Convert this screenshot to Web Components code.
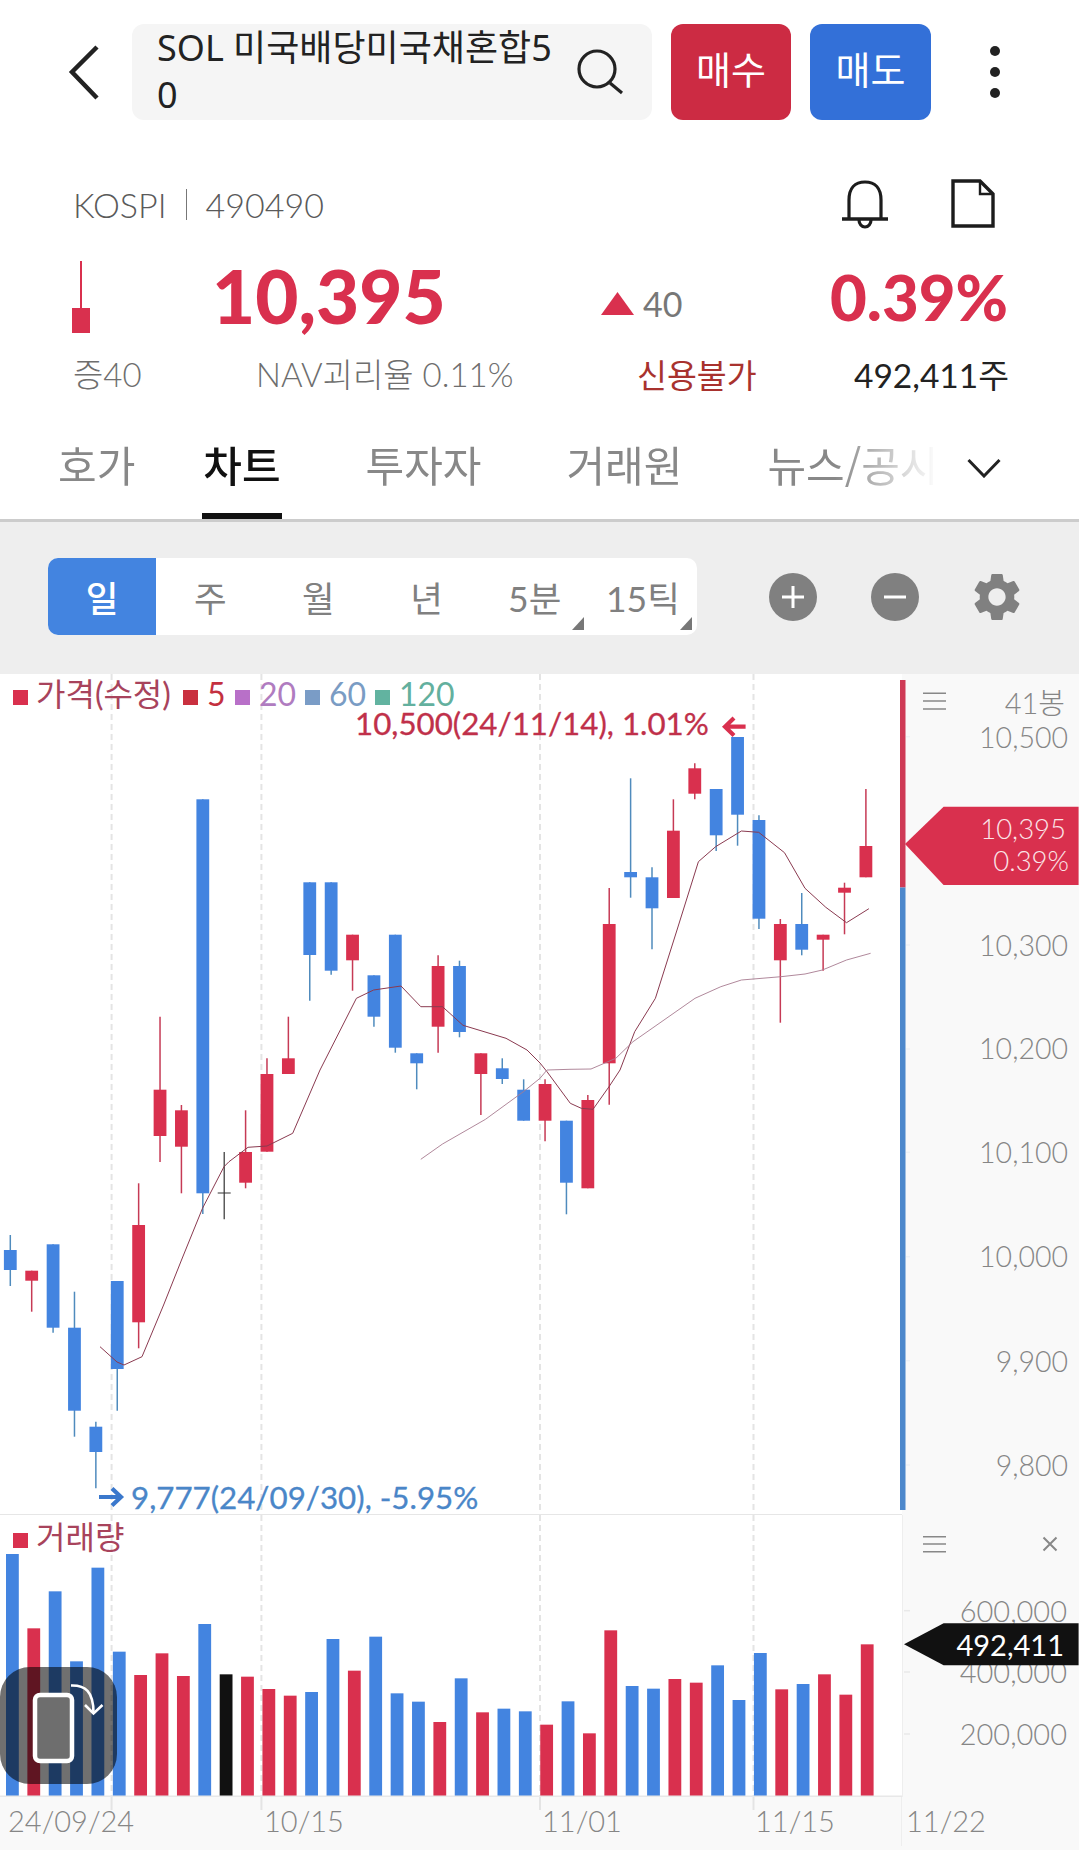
<!DOCTYPE html>
<html lang="ko">
<head>
<meta charset="utf-8">
<title>SOL 미국배당미국채혼합50</title>
<style>
  html, body { margin: 0; padding: 0; background: #fff; }
  body { width: 1079px; height: 1850px; overflow: hidden; font-family: Lato, "Noto Sans CJK KR", sans-serif; }
</style>
</head>
<body>
<app-header name="SOL 미국배당미국채혼합50"></app-header>
<quote-summary></quote-summary>
<tab-bar>
  <tab-item style="margin-right:-17px">호가</tab-item>
  <tab-item active>차트</tab-item>
  <tab-item>투자자</tab-item>
  <tab-item>거래원</tab-item>
  <tab-item>뉴스/공시</tab-item>
</tab-bar>
<chart-toolbar>
  <period-item active>일</period-item>
  <period-item>주</period-item>
  <period-item>월</period-item>
  <period-item>년</period-item>
  <period-item more>5분</period-item>
  <period-item more>15틱</period-item>
</chart-toolbar>
<stock-chart>
  <candle-pane></candle-pane>
  <volume-pane></volume-pane>
  <date-axis></date-axis>
</stock-chart>

<script>
// Colours that are used by more than one chart part
const RED = '#d9304e'
const BLUE = '#4384e0'
const AXIS = '#868686'
const GRID_X = [111.6, 261.4, 540, 753.5]

/**
 * Helper for the elements that only need a template in an open shadow root.
 *
 * @param {string} name - The tag name.
 * @param {string} html - The markup and the styles.
 */
function simpleElement (name, html) {
  const template = document.createElement('template')
  template.innerHTML = html
  customElements.define(name, class extends HTMLElement {
    constructor () {
      super()
      this.attachShadow({ mode: 'open' }).appendChild(template.content.cloneNode(true))
    }
  })
}

customElements.define('app-header', class extends HTMLElement {
  constructor () {
    super()
    this.attachShadow({ mode: 'open' }).innerHTML = `
      <style>
        :host { display: flex; box-sizing: border-box; height: 144px; padding-top: 24px; align-items: flex-start; font-family: "Noto Sans", "Noto Sans CJK KR", sans-serif; }
        .back { width: 132px; height: 96px; flex: none; }
        .search { box-sizing: border-box; width: 520px; height: 96px; flex: none; display: flex; background: #f5f5f5; border-radius: 12px; padding-left: 25px; }
        .search p { margin: 0; width: 405px; font-size: 36px; line-height: 47px; color: #222; word-break: break-all; }
        .search svg { margin-left: 13px; flex: none; }
        .btn { height: 96px; width: 120px; margin-left: 19px; flex: none; box-sizing: border-box; border-radius: 12px; color: #fff; font-size: 38px; line-height: 88px; text-align: center; font-family: "Noto Sans CJK KR", sans-serif; }
        .buy { background: #cc2b43; }
        .sell { background: #3370d8; margin-left: 19px; width: 121px; }
        .more { margin-left: 59px; flex: none; }
      </style>
      <svg class="back" viewBox="0 0 132 96"><path d="M97 23 L72 48 L97 74" fill="none" stroke="#222" stroke-width="4.5"/></svg>
      <div class="search">
        <p>${this.getAttribute('name')}</p>
        <svg width="50" height="96" viewBox="0 0 50 96"><circle cx="22" cy="45" r="18" fill="none" stroke="#222" stroke-width="3.2"/><path d="M35 59 L47 69" stroke="#222" stroke-width="3.2"/></svg>
      </div>
      <div class="btn buy">매수</div>
      <div class="btn sell">매도</div>
      <svg class="more" width="10" height="96" viewBox="0 0 10 96"><circle cx="5" cy="27" r="5" fill="#222"/><circle cx="5" cy="48" r="5" fill="#222"/><circle cx="5" cy="69" r="5" fill="#222"/></svg>`
  }
})

simpleElement('quote-summary', `
  <style>
    :host { display: block; box-sizing: border-box; height: 276px; padding: 12px 73px 0; font-family: Lato, "Noto Sans CJK KR", sans-serif; }
    .top { display: flex; align-items: center; height: 96px; color: #5a5a5a; font-size: 34px; font-weight: 300; }
    .sep { width: 1px; height: 31px; background: #777; margin: 0 19px 0 19px; }
    .bell { margin-left: auto; margin-right: 3px; }
    .doc { margin-left: 59px; margin-right: 11px; }
    .price { display: grid; grid-template-columns: 144px 385px 229px 1fr; align-items: center; height: 90px; margin-left: -1px; }
    .now { font-size: 74.5px; font-weight: 900; color: ${RED}; line-height: 1; margin-top: -4px; margin-left: -4px; }
    .diff { display: flex; align-items: center; margin-top: 13px; color: #777; font-size: 34px; gap: 9px; }
    .rate { font-size: 63.5px; font-weight: 900; color: ${RED}; line-height: 1; }
    .info { display: grid; grid-template-columns: 183px 381px 1fr auto; align-items: center; height: 62px; margin-right: -3px; font-size: 33px; font-weight: 300; color: #6e6e6e; }
    .credit { color: #a8322e; font-size: 32.5px; font-weight: 400; }
    .qty { color: #222; font-size: 33.5px; font-weight: 400; }
  </style>
  <div class="top">
    <span>KOSPI</span><span class="sep"></span><span>490490</span>
    <svg class="bell" width="48" height="50" viewBox="0 0 48 50"><path d="M8 39 V21 C8 9 14 3 24 3 C34 3 40 9 40 21 V39" fill="none" stroke="#1c1c1c" stroke-width="3.2"/><path d="M1 40 H47" stroke="#1c1c1c" stroke-width="3.6"/><path d="M18 41 a6 7 0 0 0 12 0" fill="none" stroke="#1c1c1c" stroke-width="3.2"/></svg>
    <svg class="doc" width="44" height="50" viewBox="0 0 44 50"><path d="M2 2 H29 L42 15 V47 H2 Z" fill="none" stroke="#1c1c1c" stroke-width="3.4"/><path d="M29 2 V15 H42" fill="none" stroke="#1c1c1c" stroke-width="2.4"/></svg>
  </div>
  <div class="price">
    <svg width="20" height="72" viewBox="0 0 20 72"><rect x="8" y="0" width="2" height="48" fill="${RED}"/><rect x="0" y="47" width="18" height="25" fill="${RED}"/></svg>
    <span class="now">10,395</span>
    <span class="diff"><svg width="33" height="23" viewBox="0 0 33 23"><path d="M16.5 0 L33 23 H0 Z" fill="${RED}"/></svg><span>40</span></span>
    <span class="rate">0.39%</span>
  </div>
  <div class="info">
    <span>증40</span><span>NAV괴리율 0.11%</span><span class="credit">신용불가</span><span class="qty">492,411주</span>
  </div>
`)

simpleElement('tab-bar', `
  <style>
    :host { display: flex; box-sizing: border-box; height: 102px; border-bottom: 3px solid #ccc; font-family: "Noto Sans CJK KR", sans-serif; }
    .list { flex: none; width: 938px; display: flex; gap: 85px; padding-left: 58px; box-sizing: border-box; overflow: hidden; -webkit-mask-image: linear-gradient(to right, #000 835px, transparent 938px); mask-image: linear-gradient(to right, #000 835px, transparent 938px); }
    svg { margin: 38px 0 0 29px; flex: none; }
  </style>
  <div class="list"><slot></slot></div>
  <svg width="34" height="20" viewBox="0 0 34 20"><path d="M1.5 2 L17 18 L32.5 2" fill="none" stroke="#222" stroke-width="3"/></svg>
`)

simpleElement('tab-item', `
  <style>
    :host { display: block; position: relative; flex: none; height: 99px; line-height: 88px; font-size: 42px; color: #888; white-space: nowrap; }
    :host([active]) { color: #111; font-weight: 500; }
    :host([active])::after { content: ""; position: absolute; left: -1px; right: -1px; bottom: 0; height: 6px; background: #111; }
  </style>
  <slot></slot>
`)

simpleElement('chart-toolbar', `
  <style>
    :host { display: flex; align-items: flex-start; box-sizing: border-box; height: 152px; background: #eee; padding: 36px 0 0 48px; }
    .periods { display: grid; grid-template-columns: repeat(6, 1fr); width: 649px; height: 77px; background: #fff; border-radius: 10px; overflow: hidden; }
    .zoom { margin: 15px 0 0 72px; width: 48px; height: 48px; flex: none; }
    .minus { margin-left: 54px; }
    .gear { margin-left: 54px; }
  </style>
  <div class="periods"><slot></slot></div>
  <svg class="zoom" viewBox="0 0 48 48"><circle cx="24" cy="24" r="24" fill="#808080"/><path d="M24 13 V35 M13 24 H35" stroke="#fff" stroke-width="3"/></svg>
  <svg class="zoom minus" viewBox="0 0 48 48"><circle cx="24" cy="24" r="24" fill="#808080"/><path d="M13 24 H35" stroke="#fff" stroke-width="3"/></svg>
  <svg class="zoom gear" viewBox="2.4 2 19.2 20"><path fill="#808080" d="M19.14 12.94c.04-.3.06-.61.06-.94 0-.32-.02-.64-.07-.94l2.03-1.58c.18-.14.23-.41.12-.61l-1.92-3.32c-.12-.22-.37-.29-.59-.22l-2.39.96c-.5-.38-1.03-.7-1.62-.94l-.36-2.54c-.04-.24-.24-.41-.48-.41h-3.84c-.24 0-.43.17-.47.41l-.36 2.54c-.59.24-1.13.57-1.62.94l-2.39-.96c-.22-.08-.47 0-.59.22L2.74 8.87c-.12.21-.08.47.12.61l2.03 1.58c-.05.3-.09.63-.09.94s.02.64.07.94l-2.03 1.58c-.18.14-.23.41-.12.61l1.92 3.32c.12.22.37.29.59.22l2.39-.96c.5.38 1.03.7 1.62.94l.36 2.54c.05.24.24.41.48.41h3.84c.24 0 .44-.17.47-.41l.36-2.54c.59-.24 1.13-.56 1.62-.94l2.39.96c.22.08.47 0 .59-.22l1.92-3.32c.12-.22.07-.47-.12-.61l-2.01-1.58zM12 15.6c-1.98 0-3.6-1.62-3.6-3.6s1.62-3.6 3.6-3.6 3.6 1.62 3.6 3.6-1.62 3.6-3.6 3.6z"/></svg>
`)

simpleElement('period-item', `
  <style>
    :host { display: flex; position: relative; align-items: center; justify-content: center; font-family: Lato, "Noto Sans CJK KR", sans-serif; font-size: 35.5px; color: #808080; }
    :host([active]) { background: ${BLUE}; color: #fff; font-weight: 500; }
    :host([more])::after { content: ""; position: absolute; right: 5px; bottom: 5px; width: 0; height: 0; border-style: solid; border-width: 0 0 13px 12px; border-color: transparent transparent #777 transparent; }
  </style>
  <slot></slot>
`)

simpleElement('stock-chart', `
  <style>
    :host { display: flex; flex-direction: column; position: relative; height: 1176px; background: #fff; }
    .rotate { position: absolute; left: 0; top: 993px; width: 117px; height: 117px; border-radius: 30px; background: rgba(0,0,0,.56); }
    .rotate svg { position: absolute; left: 0; top: 0; }
  </style>
  <slot></slot>
  <div class="rotate">
    <svg width="117" height="117" viewBox="0 0 117 117">
      <rect x="35" y="28" width="37" height="66" rx="5" fill="#6e6e6e" stroke="#fff" stroke-width="4.5"/>
      <path d="M71 18.5 C85 18 93.5 24 93.5 46" fill="none" stroke="#fff" stroke-width="2.6"/>
      <path d="M85 38 L93.5 46.5 L102.5 38" fill="none" stroke="#fff" stroke-width="2.6"/>
    </svg>
  </div>
`)

// Type, wick top, body top, body bottom, wick bottom of the 41 candles
const CANDLES = [
  ['b', 1235, 1250, 1270, 1286], ['r', 1270.7, 1270.7, 1280.7, 1311.7], ['b', 1244.3, 1244.3, 1327.7, 1332.7],
  ['b', 1291.7, 1327.7, 1410.7, 1436.7], ['b', 1421.7, 1426.7, 1452, 1488.3], ['b', 1281, 1281, 1369, 1410.7],
  ['r', 1183.3, 1225, 1322.3, 1348.3], ['r', 1016.7, 1089.7, 1136, 1162], ['r', 1105, 1110.3, 1146.7, 1193.3],
  ['b', 799.3, 799.3, 1193.3, 1214], ['k', 1152, 1193, 1194, 1219.3], ['r', 1110.3, 1152, 1182.7, 1188.3],
  ['r', 1058.3, 1074, 1151.7, 1151.7], ['r', 1016.7, 1058.3, 1074, 1074], ['b', 882.3, 882.3, 955, 1000.7],
  ['b', 882.3, 882.3, 970.7, 974.7], ['r', 934.7, 934.7, 960.3, 990.7], ['b', 975.3, 975.3, 1016.7, 1026.7],
  ['b', 934.7, 934.7, 1047.7, 1052.7], ['b', 1053.3, 1053.3, 1063.3, 1089.3], ['r', 955.3, 966, 1026.7, 1052.7],
  ['b', 960.7, 966, 1032, 1037.3], ['r', 1053.3, 1053.3, 1074, 1115], ['b', 1058.3, 1068.3, 1079, 1084],
  ['b', 1079.3, 1089.7, 1120.7, 1120.7], ['r', 1079.3, 1084, 1120.7, 1141.3], ['b', 1120.7, 1120.7, 1182.7, 1214.3],
  ['r', 1095, 1100, 1188.3, 1188.3], ['r', 888, 924, 1063.3, 1104.7], ['b', 778.3, 872, 877.3, 897.7],
  ['b', 867.3, 877.3, 908.3, 949.3], ['r', 799.3, 830.7, 898, 898], ['r', 763.3, 768.3, 793.7, 799.3],
  ['b', 789, 789, 835.3, 851], ['b', 737, 737, 814.7, 845.7], ['b', 815.3, 820, 918.7, 929],
  ['r', 919, 924, 960.3, 1022.7], ['b', 893, 924, 949.7, 955.3], ['r', 934.7, 934.7, 939.7, 970.7],
  ['r', 882.7, 887.7, 892.7, 934.3], ['r', 789, 846, 877.3, 877.3]
]

const MA5 = '100,1346.7 117,1362 124,1365 142,1356.7 163.6,1305 181.5,1260 202.5,1208.3 224,1166.7 229,1161.7 248,1147.3 267,1146 292.7,1133.3 320,1070 356.4,998.3 373.6,990 401,986 420.8,1006.7 442.5,1006.7 463,1025.3 506,1038.3 527,1050 540,1063 547,1071.7 570.3,1103.3 581.3,1108.3 593,1109.3 609,1086.7 620,1070 634.7,1031.7 655.4,998.3 677,930 698.4,861.7 715.6,846.7 741.4,831 758.7,832.3 784.5,852.7 805,888.3 825.8,907.3 846.5,922.7 868.9,908.7'
const MA20 = '420.8,1159.3 442.5,1144 485.5,1119.3 523.4,1091.7 540,1078.3 547,1070 570,1069.3 591,1069 615.8,1058.3 633,1041.7 695,998.3 720.8,986.7 741.4,980 781,976.7 805,974 822.4,970 846.5,960 870.6,953.3'

customElements.define('candle-pane', class extends HTMLElement {
  constructor () {
    super()
    this.attachShadow({ mode: 'open' }).innerHTML = `
      <style>
        :host { display: block; position: relative; flex: none; height: 841px; overflow: hidden; font-family: Lato, "Noto Sans CJK KR", sans-serif; }
        svg { position: absolute; left: 0; top: 0; }
        .axis { position: absolute; left: 902px; right: 0; top: 0; bottom: 0; background: #f9f9f9; }
        span { position: absolute; transform: translateY(-50%); white-space: nowrap; line-height: .85; }
        .price { right: 11px; font-size: 28.5px; color: ${AXIS}; font-weight: 300; }
        .legend { font-size: 32px; }
        .tag { right: 13px; font-size: 27.5px; color: #fbe4e8; font-weight: 300; }
        .note { font-size: 31.3px; -webkit-text-stroke: .3px currentColor; }
      </style>
      <div class="axis"></div>
      <svg width="1079" height="841" viewBox="0 674 1079 841">${this.#grid()}${this.#candles()}${this.#rest()}</svg>
      ${this.#labels()}`
  }

  /**
   * The dashed lines of the time scale and the divider under the pane.
   *
   * @returns {string} SVG markup.
   */
  #grid () {
    const lines = GRID_X.map(x => `<path d="M${x} 674 V1515" stroke="#e4e4e4" stroke-width="2" stroke-dasharray="6 4"/>`)
    return lines.join('') + '<path d="M0 1515 H902" stroke="#e6e6e6" stroke-width="2"/>'
  }

  /**
   * The candles, built from the table of prices.
   *
   * @returns {string} SVG markup.
   */
  #candles () {
    return CANDLES.map(([type, top, bodyTop, bodyBottom, bottom], i) => {
      const x = 10.3 + 21.39 * i
      if (type === 'k') {
        return `<path d="M${x} ${top} V${bottom} M${x - 6.5} ${bodyTop} H${x + 6.5}" stroke="#333" stroke-width="1.2"/>`
      }
      const wick = type === 'r' ? '#c63a55' : '#4f8bbd'
      const body = type === 'r' ? RED : BLUE
      return `<path d="M${x} ${top} V${bottom}" stroke="${wick}" stroke-width="1.5"/><rect x="${x - 6.4}" y="${bodyTop}" width="12.8" height="${bodyBottom - bodyTop}" fill="${body}"/>`
    }).join('')
  }

  /**
   * Moving averages, the side bar, the ticks, the price tag and the arrows.
   *
   * @returns {string} SVG markup.
   */
  #rest () {
    const ticks = [736.7, 945, 1049, 1152.3, 1256.7, 1360.7, 1465].map(y => `<path d="M906 ${y} H910" stroke="#eef1f5" stroke-width="1.5"/>`).join('')
    const squares = [[13, RED], [183, '#c9303f'], [235, '#b870c8'], [305, '#7a9cc6'], [375, '#62b3a0']]
      .map(([x, c]) => `<rect x="${x}" y="690" width="15" height="15" fill="${c}"/>`).join('')
    return `
      <polyline points="${MA5}" fill="none" stroke="#8a3a50" stroke-width="1"/>
      <polyline points="${MA20}" fill="none" stroke="#a77a90" stroke-width="0.9"/>
      <rect x="900" y="680" width="5.5" height="207.5" fill="#cf3a56"/>
      <rect x="900" y="887.5" width="5.5" height="622.5" fill="#4d88cc"/>
      ${ticks}${squares}
      <path d="M905 844 L943.6 806.7 H1078.6 V885 H943.6 Z" fill="${RED}"/>
      <path d="M923 693.3 H946 M923 701 H946 M923 709 H946" stroke="#888" stroke-width="1.6"/>
      <path d="M745.6 726.7 H727 M734 718 L725 726.7 L734 735.5" fill="none" stroke="${RED}" stroke-width="4.2"/>
      <path d="M99 1497 H119 M112 1488.5 L121 1497 L112 1505.5" fill="none" stroke="#3a78cc" stroke-width="4.2"/>`
  }

  /**
   * The texts that sit on the chart, each at its own place on the scale.
   *
   * @returns {string} HTML markup.
   */
  #labels () {
    const y = v => v - 674
    const prices = [['10,500', 736.5], ['10,300', 944.5], ['10,200', 1048], ['10,100', 1151.5], ['10,000', 1256], ['9,900', 1360.5], ['9,800', 1464.5]]
      .map(([text, top]) => `<span class="price" style="top:${y(top)}px">${text}</span>`).join('')
    const legend = [['가격(수정)', 36, '#a8435c'], ['5', 207, '#c4303f'], ['20', 259, '#b07cc0'], ['60', 329, '#7a9cc4'], ['120', 399, '#63b09e']]
      .map(([text, left, c]) => `<span class="legend" style="left:${left}px;top:${y(694)}px;color:${c}">${text}</span>`).join('')
    return `${legend}${prices}
      <span class="price" style="top:${y(702.5)}px;right:14px;font-size:29px">41봉</span>
      <span class="tag" style="top:${y(829)}px">10,395</span>
      <span class="tag" style="top:${y(861)}px;right:10px">0.39%</span>
      <span class="note" style="left:355px;top:${y(723)}px;color:#c0304a">10,500(24/11/14), 1.01%</span>
      <span class="note" style="left:131px;top:${y(1496.7)}px;color:#4a86c8">9,777(24/09/30), -5.95%</span>`
  }
})

// Kind and top of the volume bars, in order from the left
const VOLUME = [
  ['b', 132], ['r', 355], ['b', 244], ['b', 454], ['b', 173], ['b', 425], ['r', 495], ['r', 430], ['r', 498], ['b', 342], ['k', 493],
  ['r', 500], ['r', 537], ['r', 557], ['b', 546], ['b', 387], ['r', 482], ['b', 380], ['b', 550], ['b', 575], ['r', 636], ['b', 505],
  ['r', 607], ['b', 596], ['b', 604], ['r', 644], ['b', 574], ['r', 670], ['r', 361], ['b', 528], ['b', 536], ['r', 507], ['r', 518],
  ['b', 466], ['b', 570], ['b', 429], ['r', 538], ['b', 522], ['r', 493], ['r', 554], ['r', 403]
]

customElements.define('volume-pane', class extends HTMLElement {
  constructor () {
    super()
    const fill = { b: BLUE, r: RED, k: '#111' }
    const bars = VOLUME.map(([kind, top], i) => {
      const x = 12.4 + 21.37 * i
      const y = 1510 + top / 3
      return `<rect x="${x - 6.4}" y="${y}" width="12.8" height="${1796 - y}" fill="${fill[kind]}"/>`
    }).join('')
    const grid = GRID_X.map(x => `<path d="M${x} 1515 V1797" stroke="#e4e4e4" stroke-width="2" stroke-dasharray="6 4"/>`).join('')
    const ticks = [1610.7, 1672, 1734].map(y => `<path d="M904 ${y} H910" stroke="#e9e9e9" stroke-width="1.5"/>`).join('')
    const labels = [['600,000', 1610], ['400,000', 1671], ['200,000', 1733]]
      .map(([text, y]) => `<span class="vol" style="top:${y - 1515}px">${text}</span>`).join('')
    this.attachShadow({ mode: 'open' }).innerHTML = `
      <style>
        :host { display: block; position: relative; flex: none; height: 282px; overflow: hidden; font-family: Lato, "Noto Sans CJK KR", sans-serif; }
        svg { position: absolute; left: 0; top: 0; }
        .axis { position: absolute; left: 902px; right: 0; top: 0; bottom: 0; background: #f9f9f9; border-left: 1px solid #eee; box-sizing: border-box; }
        span { position: absolute; transform: translateY(-50%); white-space: nowrap; line-height: 1; }
        .vol { right: 12px; font-size: 29px; font-weight: 300; color: ${AXIS}; }
        .legend { left: 36px; top: 22px; font-size: 32px; color: #a8435c; }
        .now { right: 15px; top: 128.5px; font-size: 29px; color: #fff; }
      </style>
      <div class="axis"></div>
      ${labels}
      <svg width="1079" height="282" viewBox="0 1515 1079 282">
        ${grid}${bars}${ticks}
        <rect x="13" y="1533" width="15" height="15" fill="${RED}"/>
        <path d="M0 1796.5 H902" stroke="#e8e8e8" stroke-width="2"/>
        <path d="M923 1536.7 H946 M923 1544 H946 M923 1551.7 H946" stroke="#888" stroke-width="1.6"/>
        <path d="M1043.5 1537.5 L1056.5 1550.5 M1056.5 1537.5 L1043.5 1550.5" stroke="#888" stroke-width="2"/>
        <path d="M904 1644.3 L943.6 1623.3 H1078.6 V1665.3 H943.6 Z" fill="#111"/>
      </svg>
      <span class="legend">거래량</span>
      <span class="now">492,411</span>`
  }
})

customElements.define('date-axis', class extends HTMLElement {
  constructor () {
    super()
    const labels = [['24/09/24', 8], ['10/15', 264], ['11/01', 542], ['11/15', 755], ['11/22', 906]]
      .map(([text, left]) => `<span style="left:${left}px">${text}</span>`).join('')
    const stubs = GRID_X.map(x => `<path d="M${x} 0 V13" stroke="#e4e4e4" stroke-width="2"/>`).join('')
    this.attachShadow({ mode: 'open' }).innerHTML = `
      <style>
        :host { display: block; position: relative; flex: 1; background: #f9f9f9; font-family: Lato, sans-serif; }
        svg { position: absolute; left: 0; top: 0; }
        span { position: absolute; top: 23px; transform: translateY(-50%); line-height: 1; font-size: 29px; font-weight: 300; color: ${AXIS}; white-space: nowrap; }
        i { position: absolute; left: 901px; top: 0; bottom: 4px; width: 1px; background: #eee; }
      </style>
      <svg width="902" height="20">${stubs}</svg>
      <i></i>
      ${labels}`
  }
})
</script>
</body>
</html>
